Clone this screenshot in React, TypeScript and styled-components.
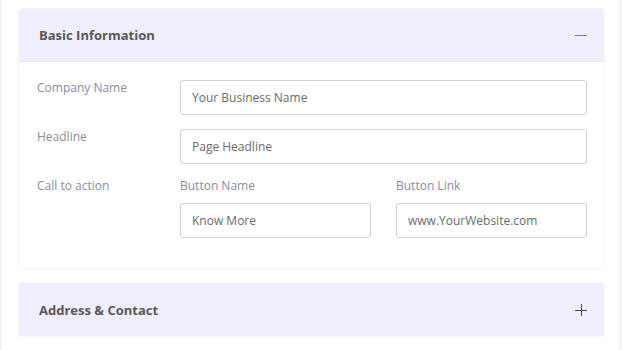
import React from 'react';
import styled, { createGlobalStyle } from 'styled-components';

const GlobalStyle = createGlobalStyle`
  body {
    margin: 0;
    background: #ffffff;
    font-family: 'Open Sans', 'Liberation Sans', sans-serif;
  }
`;

const Page = styled.div`
  box-sizing: border-box;
  width: 622px;
  height: 350px;
  border-left: 2px solid #f4f4f6;
  border-right: 3px solid #f4f4f6;
  padding: 9px 15px 0 17px;
  display: flex;
  flex-direction: column;
  gap: 15px;
  overflow: hidden;
`;

const Card = styled.section`
  background: #ffffff;
  border-radius: 3px;
  box-shadow: 0 0 3px rgba(40, 40, 80, 0.1);
  overflow: hidden;
`;

const CardHeader = styled.header`
  height: 53px;
  background: #efeefc;
  border-bottom: ${(p: { open?: boolean }) => (p.open ? '1px solid #e8e8f2' : 'none')};
  display: flex;
  align-items: center;
  justify-content: space-between;
  padding: 0 16px 0 20px;
  box-sizing: border-box;
`;

const Title = styled.h2`
  margin: 0;
  font-size: 13px;
  font-weight: 700;
  color: #5d5757;
`;

const Body = styled.div`
  padding: 18px 17px 30px 18px;
  display: flex;
  flex-direction: column;
  gap: 14px;
`;

const Row = styled.div`
  display: grid;
  grid-template-columns: 143px 1fr;
`;

const Label = styled.label`
  font-size: 12px;
  line-height: 16px;
  color: #8b8ba3;
`;

const Pair = styled.div`
  display: grid;
  grid-template-columns: 1fr 1fr;
  column-gap: 25px;
`;

const Field = styled.div`
  display: flex;
  flex-direction: column;
  gap: 9px;
`;

const Input = styled.input`
  box-sizing: border-box;
  width: 100%;
  height: 35px;
  border: 1px solid #cfd2d9;
  border-radius: 3px;
  padding: 0 11px;
  font-family: inherit;
  font-size: 12px;
  color: #6b6b6b;
  background: #ffffff;
  outline: none;

  &::placeholder {
    color: #6b6b6b;
  }
`;

const Toggle = ({ open }: { open: boolean }) => (
  <svg width="14" height="14" viewBox="0 0 14 14">
    <line x1="1" y1="7.5" x2="13" y2="7.5" stroke={open ? '#80808e' : '#4a4a55'} strokeWidth="1" />
    {!open && <line x1="7.5" y1="1" x2="7.5" y2="13" stroke="#4a4a55" strokeWidth="1" />}
  </svg>
);

export default function App() {
  return (
    <Page>
      <GlobalStyle />
      <Card>
        <CardHeader open>
          <Title>Basic Information</Title>
          <Toggle open />
        </CardHeader>
        <Body>
          <Row>
            <Label>Company Name</Label>
            <Input placeholder="Your Business Name" />
          </Row>
          <Row>
            <Label>Headline</Label>
            <Input placeholder="Page Headline" />
          </Row>
          <Row>
            <Label>Call to action</Label>
            <Pair>
              <Field>
                <Label>Button Name</Label>
                <Input placeholder="Know More" />
              </Field>
              <Field>
                <Label>Button Link</Label>
                <Input placeholder="www.YourWebsite.com" />
              </Field>
            </Pair>
          </Row>
        </Body>
      </Card>
      <Card>
        <CardHeader>
          <Title>Address &amp; Contact</Title>
          <Toggle open={false} />
        </CardHeader>
      </Card>
    </Page>
  );
}
